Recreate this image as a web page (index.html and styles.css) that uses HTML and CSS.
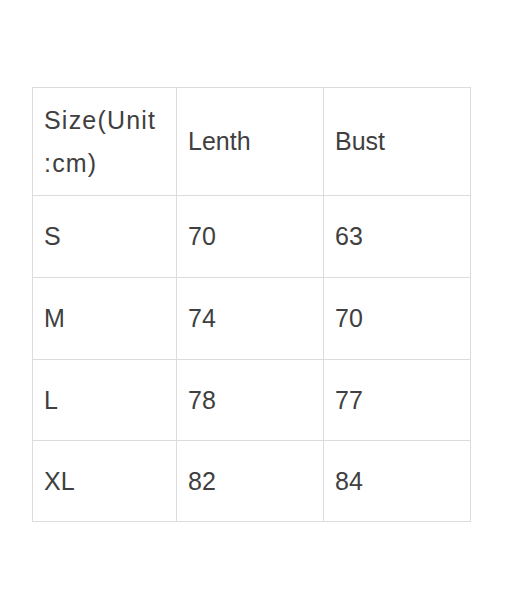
FILE: index.html
```html
<!DOCTYPE html>
<html>
<head>
<meta charset="utf-8">
<link rel="stylesheet" href="styles.css">
</head>
<body>
<div class="page">
  <table class="size-table">
    <colgroup>
      <col class="c1"><col class="c2"><col class="c3">
    </colgroup>
    <tr class="head">
      <td class="wide">Size(Unit<br>:cm)</td>
      <td>Lenth</td>
      <td>Bust</td>
    </tr>
    <tr class="tall"><td>S</td><td>70</td><td>63</td></tr>
    <tr class="tall"><td>M</td><td>74</td><td>70</td></tr>
    <tr><td>L</td><td>78</td><td>77</td></tr>
    <tr><td>XL</td><td>82</td><td>84</td></tr>
  </table>
</div>
</body>
</html>
```
FILE: styles.css
```css
html, body {
  margin: 0;
  padding: 0;
  background: #ffffff;
}
.page {
  padding: 87px 0 0 32px;
}
.size-table {
  border-collapse: collapse;
  table-layout: fixed;
  width: 438px;
  font-family: "Liberation Sans", Arial, sans-serif;
  font-size: 25px;
  color: #404040;
}
.c1 { width: 144px; }
.c2 { width: 147px; }
.c3 { width: 147px; }
.size-table td {
  border: 1px solid #dcdcdc;
  padding: 0 0 0 11px;
  height: 80px;
  vertical-align: middle;
  line-height: 43px;
}
.size-table tr.tall td {
  height: 81px;
}
.size-table tr.head td {
  height: 107px;
}
.size-table td.wide {
  letter-spacing: 1.2px;
}
```
